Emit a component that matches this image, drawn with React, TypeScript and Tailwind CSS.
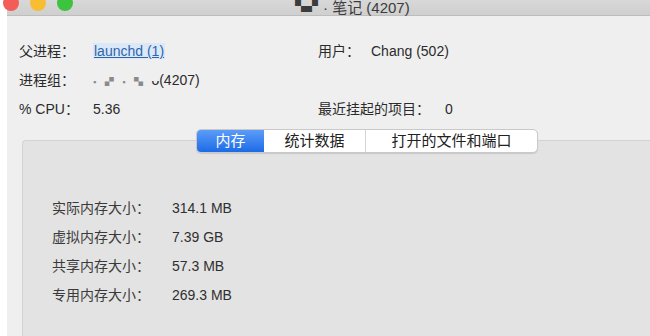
import React from "react";

const font = {
  fontFamily: '"Liberation Sans", "Noto Sans CJK SC", sans-serif',
};

function InfoRow({ label, children }: { label: string; children: React.ReactNode }) {
  return (
    <div className="flex items-center h-[29px]">
      <span className="w-[74px] text-[#2b2b2b]">{label}</span>
      <span className="text-[#2b2b2b]">{children}</span>
    </div>
  );
}

function MemRow({ label, value }: { label: string; value: string }) {
  return (
    <div className="flex items-center h-[29px]">
      <span className="w-[120px] text-[#3a3a3a]">{label}</span>
      <span className="text-[#2f2f2f]">{value}</span>
    </div>
  );
}

export default function App() {
  return (
    <div
      className="w-[650px] h-[336px] bg-white flex overflow-hidden text-[14px]"
      style={font}
    >
      <div className="w-[7px] shrink-0 bg-white" />
      <div className="flex-1 flex flex-col bg-[#efefef] min-w-0">
        {/* title bar */}
        <div className="relative h-[16px] shrink-0 bg-gradient-to-b from-[#d8d8d8] to-[#cfcfcf] border-b border-[#bdbdbd]">
          <div className="absolute -top-[5px] -left-[4px] w-[16px] h-[16px] rounded-full bg-[#f45c57]" />
          <div className="absolute -top-[5px] left-[23px] w-[16px] h-[16px] rounded-full bg-[#f8bd33]" />
          <div className="absolute -top-[5px] left-[50px] w-[16px] h-[16px] rounded-full bg-[#3cc43f]" />
          <div className="absolute top-0 left-[288px] flex items-center gap-[6px] text-[15px] leading-[15px] text-[#3c3c3c]">
            <span className="text-[12px] font-bold tracking-[-1px]">▚▞</span>
            <span>· 笔记 (4207)</span>
          </div>
        </div>

        {/* info */}
        <div className="flex pt-[21px] pl-[12px]">
          <div className="w-[299px]">
            <InfoRow label="父进程：">
              <span className="text-[#2f65ad] underline bg-[#dbe8f7] px-[1px]">launchd (1)</span>
            </InfoRow>
            <InfoRow label="进程组：">
              <span className="text-[#8a8a8a] text-[9px] tracking-[3px]">▪ ▞ ▪ ▚ </span>
              <span>ᴗ(4207)</span>
            </InfoRow>
            <InfoRow label="% CPU：">5.36</InfoRow>
          </div>
          <div>
            <div className="flex items-center h-[29px]">
              <span className="w-[53px] text-[#2b2b2b]">用户：</span>
              <span className="text-[#2b2b2b]">Chang (502)</span>
            </div>
            <div className="h-[29px]" />
            <div className="flex items-center h-[29px]">
              <span className="w-[127px] text-[#2b2b2b]">最近挂起的项目：</span>
              <span className="text-[#2b2b2b]">0</span>
            </div>
          </div>
        </div>

        {/* tab panel */}
        <div className="mt-[16px] ml-[15px] flex-1 bg-[#e3e3e3] border-t border-l border-[#d2d2d2] rounded-tl-[4px] flex flex-col">
          <div className="-mt-[12px] ml-[173px] flex h-[24px] w-max rounded-[5px] border border-[#c9c9c9] bg-white shadow-[0_1px_1px_rgba(0,0,0,0.12)] overflow-hidden text-[15px]">
            <div className="w-[67px] flex items-center justify-center text-white bg-gradient-to-b from-[#5a9cf8] to-[#1b6be6]">
              内存
            </div>
            <div className="w-[102px] flex items-center justify-center text-[#222] border-r border-[#d6d6d6]">
              统计数据
            </div>
            <div className="w-[171px] flex items-center justify-center text-[#222]">
              打开的文件和端口
            </div>
          </div>
          <div className="pt-[41px] pl-[29px]">
            <MemRow label="实际内存大小：" value="314.1 MB" />
            <MemRow label="虚拟内存大小：" value="7.39 GB" />
            <MemRow label="共享内存大小：" value="57.3 MB" />
            <MemRow label="专用内存大小：" value="269.3 MB" />
          </div>
        </div>
      </div>
    </div>
  );
}
